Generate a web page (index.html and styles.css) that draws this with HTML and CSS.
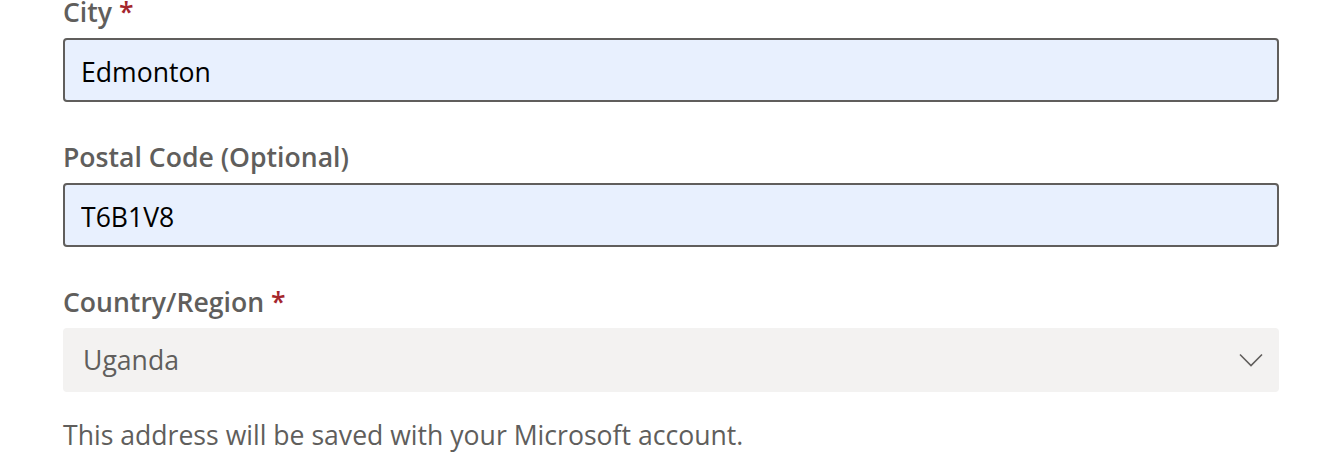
FILE: index.html
```html
<!DOCTYPE html>
<html lang="en">
<head>
<meta charset="utf-8">
<title>Address</title>
<link rel="stylesheet" href="styles.css">
</head>
<body>
<form class="form">
  <div class="field">
    <label class="label" for="city">City <span class="req">*</span></label>
    <input class="input" id="city" type="text" value="Edmonton">
  </div>
  <div class="field">
    <label class="label" for="postal">Postal Code (Optional)</label>
    <input class="input" id="postal" type="text" value="T6B1V8">
  </div>
  <div class="field">
    <label class="label" for="country">Country/Region <span class="req">*</span></label>
    <div class="select" id="country">
      <span class="select-value">Uganda</span>
      <svg class="chevron" width="24" height="14" viewBox="0 0 24 14" aria-hidden="true">
        <path d="M1 1.5 L12 12.5 L23 1.5" fill="none" stroke="#605e5c" stroke-width="1.6"/>
      </svg>
    </div>
  </div>
  <p class="note">This address will be saved with your Microsoft account.</p>
</form>
</body>
</html>
```
FILE: styles.css
```css
html, body {
  margin: 0;
  padding: 0;
  background: #ffffff;
}
body {
  font-family: "Open Sans", "Noto Sans", sans-serif;
  font-size: 26.6px;
}
.form {
  width: 1216px;
  margin: -6px 0 0 63px;
  display: flex;
  flex-direction: column;
}
.field {
  display: flex;
  flex-direction: column;
  margin-bottom: 37px;
}
.label {
  display: block;
  height: 36px;
  line-height: 36px;
  margin-bottom: 8px;
  font-weight: 600;
  color: #605e5c;
}
.req {
  color: #a4262c;
}
.input {
  box-sizing: border-box;
  height: 64px;
  width: 100%;
  margin: 0;
  padding: 4px 16px 0;
  border: 2px solid #605e5c;
  border-radius: 4px;
  background: #e8f0fe;
  font-family: inherit;
  font-size: 26.6px;
  color: #000000;
  outline: none;
}
.select {
  box-sizing: border-box;
  height: 64px;
  display: flex;
  align-items: center;
  justify-content: space-between;
  padding: 0 16px 0 20px;
  border-radius: 4px;
  background: #f3f2f1;
  color: #605e5c;
}
.chevron {
  display: block;
}
.note {
  margin: -12px 0 0;
  line-height: 36px;
  color: #605e5c;
}
```
